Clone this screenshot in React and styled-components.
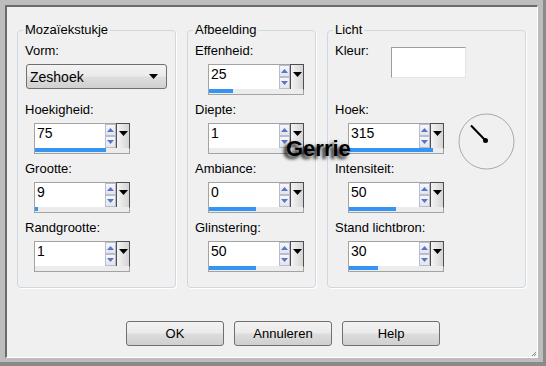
import React from "react";
import styled, { createGlobalStyle } from "styled-components";

const Global = createGlobalStyle`
  html, body { margin: 0; padding: 0; background: #bdbdbd; }
  body { font-family: "Liberation Sans", Arial, sans-serif; font-size: 13px; color: #000; }
`;

const Frame = styled.div`
  position: relative;
  width: 546px;
  height: 366px;
  box-sizing: border-box;
  background: #bdbdbd;
  border-right: 3px solid #8a8a8a;
  border-bottom: 4px solid #8a8a8a;
  padding: 5px 5px 4px 5px;
`;

const Window = styled.div`
  position: relative;
  height: 100%;
  box-sizing: border-box;
  background: #f0f0f0;
  border-top: 2px solid #6b6b6b;
  border-left: 2px solid #6b6b6b;
  border-right: 1px solid #ffffff;
  border-bottom: 1px solid #ffffff;
  padding: 23px 11px 0 10px;
  display: flex;
  flex-direction: column;
`;

const Groups = styled.div`
  display: flex;
  gap: 11px;
  height: 258px;
`;

const Group = styled.div`
  position: relative;
  box-sizing: border-box;
  width: ${(p) => p.$w}px;
  height: 258px;
  border: 1px solid #cfd8e1;
  border-radius: 4px;
  box-shadow: 1px 1px 0 #ffffff;
  padding: 12px 0 0 7px;
  display: flex;
  flex-direction: column;
`;

const Legend = styled.span`
  position: absolute;
  top: -9px;
  left: 5px;
  padding: 0 2px;
  background: #f0f0f0;
  line-height: 15px;
`;

const Field = styled.div`
  height: 59px;
  display: flex;
  flex-direction: column;
  align-items: flex-start;
  gap: 6px;
`;

const Label = styled.div`
  line-height: 15px;
  white-space: nowrap;
`;

const SpinBox = styled.div`
  box-sizing: border-box;
  width: 96px;
  height: 31px;
  margin-left: ${(p) => p.$indent}px;
  border: 1px solid #a3a3a3;
  display: flex;
  flex-direction: column;
  background: #ffffff;
`;

const SpinTop = styled.div`
  height: 24px;
  display: flex;
`;

const ValueField = styled.div`
  flex: 1;
  background: #fff;
  font-size: 14px;
  line-height: 16px;
  padding: 1px 0 0 2px;
`;

const SpinCol = styled.div`
  width: 11px;
  display: flex;
  flex-direction: column;
`;

const SpinBtn = styled.div`
  box-sizing: border-box;
  height: 12px;
  border: 1px solid #b9bdca;
  background: linear-gradient(#f6f7fb, #e2e5ee);
  display: flex;
  align-items: center;
  justify-content: center;
`;

const DropBtn = styled.div`
  box-sizing: border-box;
  width: 14px;
  height: 26px;
  margin: -1px -1px 0 0;
  border: 1px solid #4f4f4f;
  border-bottom-color: #9a9a9a;
  background: linear-gradient(90deg, #f4f4f4, #d4d4d4);
  display: flex;
  justify-content: center;
  padding-top: 7px;
`;

const Track = styled.div`
  height: 5px;
  background: #ececec;
`;

const Fill = styled.div`
  height: 4px;
  width: ${(p) => p.$w}px;
  background: #3595f2;
`;

const Tri = ({ up, color, w = 7, h = 4 }) => (
  <svg width={w} height={h} viewBox={`0 0 ${w} ${h}`}>
    <polygon
      points={up ? `0,${h} ${w},${h} ${w / 2},0` : `0,0 ${w},0 ${w / 2},${h}`}
      fill={color}
    />
  </svg>
);

const Spinner = ({ value, fill, indent }) => (
  <SpinBox $indent={indent}>
    <SpinTop>
      <ValueField>{value}</ValueField>
      <SpinCol>
        <SpinBtn>
          <Tri up color="#5a74c6" />
        </SpinBtn>
        <SpinBtn>
          <Tri color="#5a74c6" />
        </SpinBtn>
      </SpinCol>
      <DropBtn>
        <Tri color="#000" w={9} h={5} />
      </DropBtn>
    </SpinTop>
    <Track>
      <Fill $w={fill} />
    </Track>
  </SpinBox>
);

const Select = styled.div`
  box-sizing: border-box;
  width: 141px;
  height: 25px;
  margin-left: 1px;
  border: 1px solid #707070;
  border-radius: 3px;
  background: linear-gradient(#f3f3f3, #ebebeb 48%, #dedede 52%, #d0d0d0);
  display: flex;
  align-items: center;
  justify-content: space-between;
  padding: 0 8px 0 3px;
  font-size: 14px;
  line-height: 16px;
`;

const KleurRow = styled.div`
  height: 59px;
  display: flex;
  align-items: flex-start;
`;

const KleurLabel = styled(Label)`
  width: 56px;
`;

const ColorBox = styled.div`
  box-sizing: border-box;
  width: 75px;
  height: 31px;
  margin-top: 4px;
  background: #ffffff;
  border-top: 1px solid #9c9c9c;
  border-left: 1px solid #9c9c9c;
  border-right: 1px solid #e4e4e4;
  border-bottom: 1px solid #e4e4e4;
`;

const HoekRow = styled.div`
  height: 59px;
  display: flex;
  align-items: flex-start;
`;

const Dial = styled.svg`
  margin: 11px 0 0 14px;
  flex: none;
`;

const Buttons = styled.div`
  display: flex;
  gap: 10px;
  margin-top: 33px;
  padding-left: 109px;
`;

const Button = styled.div`
  box-sizing: border-box;
  width: 98px;
  height: 25px;
  border: 1px solid #707070;
  border-radius: 3px;
  background: linear-gradient(#f2f2f2, #ebebeb 48%, #dddddd 52%, #cfcfcf);
  display: flex;
  align-items: center;
  justify-content: center;
  line-height: 15px;
`;

const Grip = styled.svg`
  position: absolute;
  right: 0;
  bottom: 0;
`;

const Watermark = styled.div`
  position: absolute;
  left: 286px;
  top: 138px;
  font-family: "Liberation Sans", Arial, sans-serif;
  font-weight: bold;
  font-size: 22px;
  line-height: 22px;
  color: #000;
  text-shadow: -3px 3px 3px rgba(0, 0, 0, 0.7), -2px 2px 5px rgba(0, 0, 0, 0.4);
`;

const col1 = [
  { label: "Hoekigheid:", value: "75", fill: 71 },
  { label: "Grootte:", value: "9", fill: 3 },
  { label: "Randgrootte:", value: "1", fill: 0 },
];
const col2 = [
  { label: "Effenheid:", value: "25", fill: 24 },
  { label: "Diepte:", value: "1", fill: 0 },
  { label: "Ambiance:", value: "0", fill: 47 },
  { label: "Glinstering:", value: "50", fill: 47 },
];
const col3 = [
  { label: "Intensiteit:", value: "50", fill: 47 },
  { label: "Stand lichtbron:", value: "30", fill: 29 },
];

const SpinField = ({ label, value, fill, indent }) => (
  <Field>
    <Label>{label}</Label>
    <Spinner value={value} fill={fill} indent={indent} />
  </Field>
);

export default function App() {
  return (
    <>
      <Global />
      <Frame>
        <Window>
          <Groups>
            <Group $w={159}>
              <Legend>Mozaïekstukje</Legend>
              <Field>
                <Label>Vorm:</Label>
                <Select>
                  <span>Zeshoek</span>
                  <Tri color="#000" w={9} h={5} />
                </Select>
              </Field>
              {col1.map((f) => (
                <SpinField key={f.label} {...f} indent={9} />
              ))}
            </Group>
            <Group $w={129}>
              <Legend>Afbeelding</Legend>
              {col2.map((f) => (
                <SpinField key={f.label} {...f} indent={13} />
              ))}
            </Group>
            <Group $w={199}>
              <Legend>Licht</Legend>
              <KleurRow>
                <KleurLabel>Kleur:</KleurLabel>
                <ColorBox />
              </KleurRow>
              <HoekRow>
                <SpinField label="Hoek:" value="315" fill={84} indent={13} />
                <Dial width="57" height="57" viewBox="0 0 57 57">
                  <circle cx="28.5" cy="28.5" r="27.5" fill="none" stroke="#a9a9a9" strokeWidth="1" />
                  <line x1="13" y1="12.5" x2="27.5" y2="27.5" stroke="#000" strokeWidth="2" />
                  <circle cx="27.5" cy="27.5" r="2.5" fill="#000" />
                </Dial>
              </HoekRow>
              {col3.map((f) => (
                <SpinField key={f.label} {...f} indent={13} />
              ))}
            </Group>
          </Groups>
          <Buttons>
            <Button>OK</Button>
            <Button>Annuleren</Button>
            <Button>Help</Button>
          </Buttons>
          <Grip width="6" height="6" viewBox="0 0 6 6">
            <path d="M5 1 L1 5 M5 3 L3 5" stroke="#8a8a8a" strokeWidth="1" />
          </Grip>
        </Window>
        <Watermark>Gerrie</Watermark>
      </Frame>
    </>
  );
}
